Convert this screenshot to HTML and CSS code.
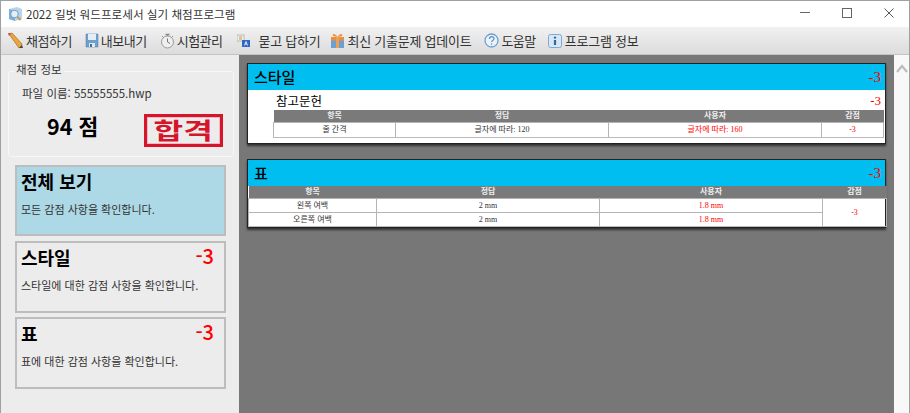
FILE: index.html
```
<!DOCTYPE html>
<html lang="ko">
<head>
<meta charset="utf-8">
<title>2022 길벗 워드프로세서 실기 채점프로그램</title>
<link rel="stylesheet" href="styles.css">
</head>
<body>
<div class="window">
  <header class="titlebar">
    <svg class="app-icon" width="15" height="16" viewBox="0 0 15 16"><path d="M1 3l8-2 5 2v10l-7 2-6-2z" fill="#b9d3e8"/><path d="M1 3l6 2v10l-6-2z" fill="#7fb0d8"/><circle cx="6.500" cy="8" r="3.800" fill="#e6eef5" stroke="#6f9fc8"/><path d="M9.500 11l3 3" stroke="#c89a4a" stroke-width="2"/></svg>
    <span class="title-text">2022 길벗 워드프로세서 실기 채점프로그램</span>
    <div class="win-controls">
      <svg width="10" height="10" viewBox="0 0 10 10"><path d="M0 4.500h10" stroke="#666"/></svg>
      <svg width="10" height="10" viewBox="0 0 10 10"><rect x=".5" y=".5" width="9" height="9" fill="none" stroke="#666"/></svg>
      <svg width="10" height="10" viewBox="0 0 10 10"><path d="M.5.5l9 9M9.500.5l-9 9" stroke="#555"/></svg>
    </div>
  </header>
  <nav class="toolbar">
    <div class="tool t1"><svg width="17" height="17" viewBox="0 0 17 17"><path d="M2 2l3-1 10 11-1 3-2 1z" fill="#e8a83a" stroke="#a5672a" stroke-width=".7"/><path d="M1 1l3 .5L2 4z" fill="#b8433a"/><path d="M12 16l3-3 1 3z" fill="#444"/></svg><span>채점하기</span></div>
    <div class="tool t2"><svg width="14" height="15" viewBox="0 0 14 15"><path d="M1 1h12v13H1z" fill="#6f9fcd" stroke="#5b86b3" stroke-width=".6"/><path d="M3 1h8v6H3z" fill="#e4edf5"/><path d="M4 10h6v4H4z" fill="#dfe6ec"/><path d="M5 11h2v3H5z" fill="#456f9a"/></svg><span>내보내기</span></div>
    <div class="tool t3"><svg width="15" height="16" viewBox="0 0 15 16"><circle cx="7.500" cy="9" r="6" fill="#efefef" stroke="#999"/><path d="M7.500 9V5.500M7.500 9l2.500 1.500" stroke="#777"/><path d="M5.500 1.500h4M7.500 1.500V3" stroke="#8a8a8a" stroke-width="1.300"/><path d="M2 3l1.500 1.500M13 3l-1.500 1.500" stroke="#999"/></svg><span>시험관리</span></div>
    <div class="tool t4"><svg class="qa" width="14" height="14" viewBox="0 0 14 14"><rect x="0" y="1" width="7" height="6" fill="#eee" stroke="#999" stroke-width=".6"/><rect x="5" y="6" width="8" height="7" fill="#2f66c8"/><path d="M2 3h3M2 5h3" stroke="#d59a20"/><path d="M7.500 11.500l1.500-4 1.500 4M8 10h2" stroke="#fff" stroke-width=".8" fill="none"/></svg><span class="wide">묻고 답하기</span></div>
    <div class="tool t5"><svg width="15" height="16" viewBox="0 0 15 16"><path d="M1 4h13v11H1z" fill="#6d9fd4"/><path d="M1 4h13v3.500H1z" fill="#ee8e3a"/><path d="M6 4h3v11H6z" fill="#f0a050"/><path d="M7.500 4C5 0 2 .500 3 3zM7.500 4C10 0 13 .500 12 3z" fill="#ee8e3a"/></svg><span class="wide">최신 기출문제 업데이트</span></div>
    <div class="tool t6"><svg width="15" height="15" viewBox="0 0 15 15"><circle cx="7.500" cy="7.500" r="6.500" fill="#eaf2fa" stroke="#6d9fd4" stroke-width="1.300"/><path d="M5.500 6c0-3 4.500-3 4.500-.3 0 1.600-2.400 1.800-2.400 3.300" fill="none" stroke="#5f8fbf" stroke-width="1.200"/><circle cx="7.600" cy="11" r=".8" fill="#5f8fbf"/></svg><span>도움말</span></div>
    <div class="tool t7"><svg width="14" height="14" viewBox="0 0 14 14"><rect x=".5" y=".5" width="13" height="13" rx="2" fill="#d8e7f5" stroke="#7fa9d2"/><path d="M7 6v5" stroke="#2f6aa8" stroke-width="2.200"/><circle cx="7" cy="3.600" r="1.200" fill="#2f6aa8"/></svg><span class="wide">프로그램 정보</span></div>
  </nav>
  <div class="body-row">
    <aside class="sidebar">
      <fieldset class="info">
        <legend>채점 정보</legend>
        <p class="file">파일 이름: 55555555.hwp</p>
        <div class="score-row">
          <strong class="score">94 점</strong>
          <span class="stamp"><span class="stamp-text">합격</span></span>
        </div>
      </fieldset>
      <section class="nav-card active">
        <div class="nav-head"><h2>전체 보기</h2></div>
        <p>모든 감점 사항을 확인합니다.</p>
      </section>
      <section class="nav-card">
        <div class="nav-head"><h2>스타일</h2><span class="minus">-3</span></div>
        <p>스타일에 대한 감점 사항을 확인합니다.</p>
      </section>
      <section class="nav-card">
        <div class="nav-head"><h2>표</h2><span class="minus">-3</span></div>
        <p>표에 대한 감점 사항을 확인합니다.</p>
      </section>
    </aside>
    <main class="content">
      <article class="result">
        <div class="result-head"><h3>스타일</h3><span class="head-minus">-3</span></div>
        <div class="sub-head"><h4>참고문헌</h4><span class="sub-minus">-3</span></div>
        <table class="grid inset">
          <colgroup><col class="a1"><col class="a2"><col class="a3"><col class="a4"></colgroup>
          <thead><tr><th>항목</th><th>정답</th><th>사용자</th><th>감점</th></tr></thead>
          <tbody><tr class="tall"><td>줄 간격</td><td>글자에 따라: 120</td><td class="red">글자에 따라: 160</td><td class="red">-3</td></tr></tbody>
        </table>
      </article>
      <article class="result">
        <div class="result-head"><h3>표</h3><span class="head-minus">-3</span></div>
        <table class="grid">
          <colgroup><col class="b1"><col class="b2"><col class="b3"><col class="b4"></colgroup>
          <thead><tr><th>항목</th><th>정답</th><th>사용자</th><th>감점</th></tr></thead>
          <tbody>
            <tr><td>왼쪽 여백</td><td>2 mm</td><td class="red">1.8 mm</td><td class="red" rowspan="2">-3</td></tr>
            <tr><td>오른쪽 여백</td><td>2 mm</td><td class="red">1.8 mm</td></tr>
          </tbody>
        </table>
      </article>
    </main>
    <div class="scrollbar">
      <svg width="12" height="9" viewBox="0 0 12 9"><path d="M1 8l5-6 5 6" fill="none" stroke="#bdbdbd" stroke-width="2.200"/></svg>
    </div>
  </div>
</div>
</body>
</html>
```
FILE: styles.css
```
* { box-sizing: border-box; }
html, body { margin: 0; height: 100%; overflow: hidden; }
body { font-family: "Noto Sans CJK KR", "Noto Sans", sans-serif; color: #222; }
.window { height: 413px; display: flex; flex-direction: column; border: 1px solid #a0a0a0; border-bottom: 0; background: #fff; }
.titlebar { height: 26px; flex: none; display: flex; align-items: center; padding-left: 7px; background: #fff; }
.app-icon { margin-right: 3px; }
.title-text { font-size: 11.600px; color: #333; }
.win-controls { margin-left: auto; display: flex; gap: 32px; padding: 0 15px 2px 0; align-items: center; }
.toolbar { height: 28px; flex: none; display: flex; align-items: center; padding-left: 6px; background: linear-gradient(#f1f1f1, #dcdcdc); border-bottom: 1px solid #c4c4c4; }
.tool { display: flex; align-items: center; gap: 2px; font-size: 13px; color: #333; white-space: nowrap; }
.tool span { letter-spacing: -.5px; }
.tool .wide { letter-spacing: -.25px; }
.t2 { margin-left: 13px; }
.t3 { margin-left: 13px; }
.t4 { margin-left: 14px; gap: 8px; }
.t5 { margin-left: 10px; }
.t6 { margin-left: 13px; }
.t7 { margin-left: 12px; gap: 3px; }
.body-row { flex: 1; min-height: 0; display: flex; }
.sidebar { width: 238px; flex: none; background: #ececec; padding: 8px 12px 0 7px; }
.info { margin: 0; padding: 0; height: 94px; border: 1px solid #f7f7f7; border-radius: 3px; width: 226px; }
.info legend { margin-left: 5px; padding: 0 2px 4px; font-size: 11.500px; line-height: 12px; color: #333; }
.file { margin: 6px 0 0 13px; font-size: 11.500px; line-height: 16px; color: #333; }
.score-row { display: flex; align-items: center; margin-top: 6px; padding-left: 38px; }
.score { font-size: 21.500px; line-height: 32px; color: #000; width: 97px; font-weight: 700; margin-bottom: 2px; }
.stamp { width: 79px; height: 33px; margin-top: 7px; border: 3px solid #d6142a; box-shadow: inset 0 0 0 1px #eeb9bf; color: #d6142a; display: flex; justify-content: center; }
.stamp-text { display: block; font-size: 23px; font-weight: 700; line-height: 25px; white-space: nowrap; transform: scaleX(1.4); }
.nav-card { margin: 9px 0 0 7px; width: 211px; height: 72px; border: 2px solid #bdbdbd; padding: 1px 4px; background: #ececec; }
.nav-card + .nav-card { margin-top: 4px; }
.nav-card.active + .nav-card { margin-top: 5px; }
.nav-card.active { background: #add8e6; height: 71px; margin-top: 8px; }
.nav-card h2 { margin: 0; font-size: 18px; line-height: 26px; color: #000; font-weight: 700; }
.nav-head { display: flex; justify-content: space-between; padding-right: 6px; }
.minus { color: #f00; font-size: 20px; line-height: 24px; font-weight: 500; }
.nav-card p { margin: 7px 0 0; font-size: 11px; line-height: 16px; color: #333; }
.content { flex: 1; min-width: 0; background: #777; padding: 8px 8px 0; display: flex; flex-direction: column; gap: 15px; }
.result { background: #fff; border: 1px solid #222; box-shadow: 0 2px 2px #333; width: 639px; }
.result-head { height: 26px; background: #00bff0; display: flex; align-items: center; justify-content: space-between; padding: 0 4px 0 6px; }
.result-head h3 { margin: 0; font-size: 15px; font-weight: 500; color: #000; line-height: 24px; }
.head-minus { font-family: "Liberation Serif", serif; color: #f00; font-size: 15px; }
.sub-head { height: 20px; display: flex; align-items: flex-end; justify-content: space-between; padding: 0 4px 0 28px; }
.sub-head h4 { margin: 0; font-size: 12.500px; font-weight: 400; color: #000; line-height: 19px; }
.sub-minus { font-family: "Liberation Serif", serif; color: #f00; font-size: 13px; line-height: 18px; }
.grid { border-collapse: collapse; table-layout: fixed; width: 638px; font-family: "Liberation Serif", "Noto Sans CJK KR", serif; font-size: 8px; }
.inset { width: 610px; margin: 0 0 5px 25px; }
.grid th { background: #7a7a7a; color: #eee; height: 12px; padding: 0; font-weight: 700; line-height: 12px; }
.grid td { height: 14px; padding: 0; text-align: center; color: #333; border: 1px solid #b4b4b4; line-height: 12px; }
.grid tr.tall td { height: 15px; }
.grid tr:last-child td { border-bottom-color: #bbb; }
.red { color: #f00 !important; }
.a1 { width: 122px; }
.a2 { width: 213px; }
.a3 { width: 213px; }
.a4 { width: 62px; }
.b1 { width: 128px; }
.b2 { width: 223px; }
.b3 { width: 223px; }
.b4 { width: 64px; }
.scrollbar { width: 15px; flex: none; background: #f8f8f8; display: flex; justify-content: center; padding-top: 9px; align-items: flex-start; }
```
